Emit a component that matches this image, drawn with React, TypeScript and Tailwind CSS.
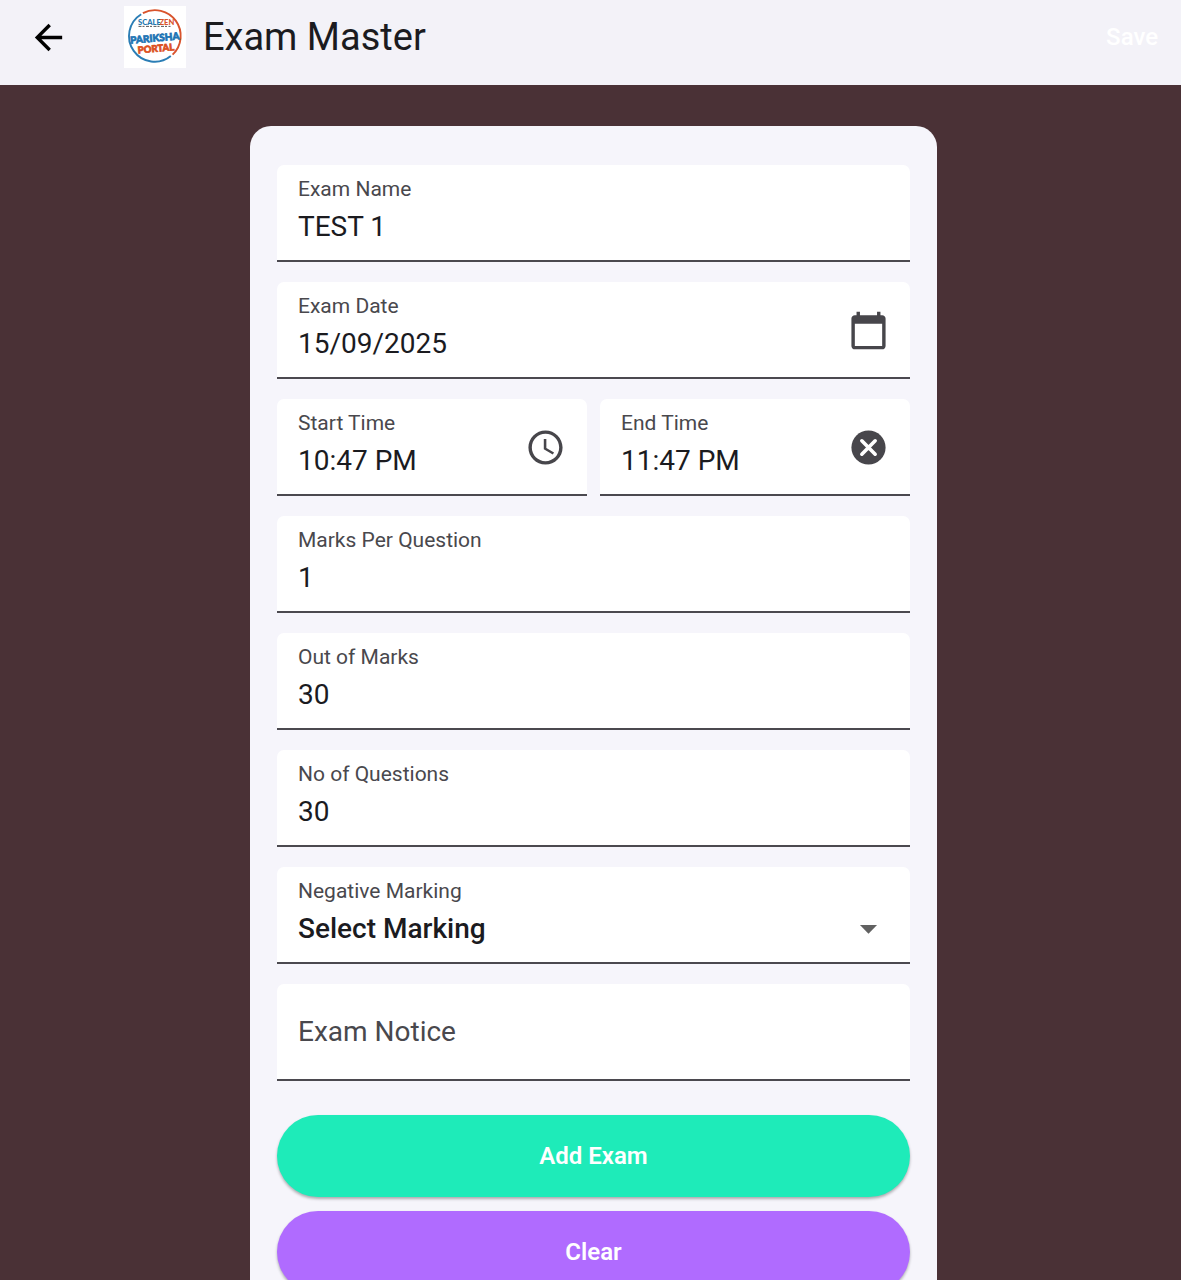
import { useState } from "react";
import type { ReactNode } from "react";

function BackIcon() {
  return (
    <svg viewBox="0 0 24 24" className="size-[41px]" fill="currentColor" aria-hidden="true">
      <path d="M20 11H7.83l5.59-5.59L12 4l-8 8 8 8 1.41-1.41L7.83 13H20v-2z" />
    </svg>
  );
}

function CalendarIcon() {
  return (
    <svg viewBox="0 0 24 24" className="size-[41px]" fill="currentColor" aria-hidden="true">
      <path d="M20 3h-1V1h-2v2H7V1H5v2H4c-1.1 0-2 .9-2 2v16c0 1.1.9 2 2 2h16c1.1 0 2-.9 2-2V5c0-1.1-.9-2-2-2zm0 18H4V8h16v13z" />
    </svg>
  );
}

function ClockIcon() {
  return (
    <svg viewBox="0 0 24 24" className="size-[41px]" fill="currentColor" aria-hidden="true">
      <path d="M11.99 2C6.47 2 2 6.48 2 12s4.47 10 9.99 10C17.52 22 22 17.52 22 12S17.52 2 11.99 2zM12 20c-4.42 0-8-3.58-8-8s3.58-8 8-8 8 3.58 8 8-3.58 8-8 8zm.5-13H11v6l5.25 3.15.75-1.23-4.5-2.67z" />
    </svg>
  );
}

function CancelIcon() {
  return (
    <svg viewBox="0 0 24 24" className="size-[41px]" aria-hidden="true">
      <circle cx="12" cy="12" r="10" fill="currentColor" />
      <path d="M8.1 8.1l7.8 7.8M15.9 8.1l-7.8 7.8" stroke="#fff" strokeWidth="2.1" strokeLinecap="round" />
    </svg>
  );
}

function DropIcon() {
  return (
    <svg viewBox="0 0 24 24" className="size-[41px]" fill="currentColor" aria-hidden="true">
      <path d="M7 10l5 5 5-5z" />
    </svg>
  );
}

function Logo() {
  return (
    <svg viewBox="0 0 62 62" className="size-[62px] bg-white" role="img" aria-label="Scale Zen Pariksha Portal">
      <g fill="none" strokeWidth="1.9">
        <path d="M18.9 7.2A25.7 25.7 0 0 1 48.6 48.6" stroke="#d9532c" />
        <path d="M17.2 8.2A25.7 25.7 0 1 0 46.8 50.1" stroke="#2a7db5" />
      </g>
      <g fontFamily="Lato, sans-serif" fontWeight="900">
        <text x="14" y="18.8" fontSize="7.6" fill="#2376ad">
          SCALE
        </text>
        <text x="35.5" y="18.8" fontSize="7.6" fill="#d9532c">
          ZEN
        </text>
        <path d="M14.5 20.4h32" stroke="#444" strokeWidth="0.9" strokeDasharray="3 1 2 1.5" />
        <g transform="rotate(-5 31 32)" strokeWidth="0.7">
          <text x="30.8" y="35.6" fontSize="10" textAnchor="middle" fill="#1c74b4" stroke="#1c74b4">
            PARIKSHA
          </text>
          <text x="31" y="46" fontSize="9.6" textAnchor="middle" fill="#dc4f20" stroke="#dc4f20">
            PORTAL
          </text>
        </g>
      </g>
    </svg>
  );
}

type FieldProps = {
  id: string;
  label: string;
  initial: string;
  action?: string;
  icon?: ReactNode;
};

function Field({ id, label, initial, action, icon }: FieldProps) {
  const [value, setValue] = useState(initial);
  return (
    <div className="flex h-[97px] min-w-0 rounded-t-[7px] border-b-2 border-[#4b494f] bg-white px-[21px]">
      <div className="flex min-w-0 flex-1 flex-col gap-[10px] pt-3">
        <label htmlFor={id} className="text-[21px] leading-6 text-[#49484d]">
          {label}
        </label>
        <input
          id={id}
          value={value}
          onChange={(e) => setValue(e.target.value)}
          className="h-8 w-full bg-transparent text-[28px] leading-8 text-[#1b1b1f] outline-none"
        />
      </div>
      {icon && (
        <button type="button" aria-label={action} className="mt-7 size-[41px] shrink-0 text-[#47464b]">
          {icon}
        </button>
      )}
    </div>
  );
}

export default function App() {
  return (
    <div className="flex h-screen flex-col bg-[#4a3136] font-[Roboto,sans-serif]">
      <header className="flex shrink-0 items-center bg-[#f3f2f8] pt-[6px] pr-[23px] pb-[17px] pl-7">
        <button type="button" aria-label="Back" className="text-black">
          <BackIcon />
        </button>
        <div className="ml-[55px]">
          <Logo />
        </div>
        <h1 className="ml-[17px] flex-1 text-[38px] leading-[44px] text-[#1b1b1f]">Exam Master</h1>
        <button type="button" className="text-[24px] leading-8 font-medium text-white">
          Save
        </button>
      </header>

      <main className="min-h-0 flex-1 overflow-y-auto pt-[41px] pl-[6px] [scrollbar-width:none]">
        <form
          onSubmit={(e) => e.preventDefault()}
          className="mx-auto max-w-[687px] rounded-[21px] bg-[#f6f5fb] px-[27px] pt-[39px] pb-10"
        >
          <div className="flex flex-col gap-5">
            <Field id="name" label="Exam Name" initial="TEST 1" />
            <Field id="date" label="Exam Date" initial="15/09/2025" action="Pick date" icon={<CalendarIcon />} />
            <div className="grid grid-cols-2 gap-[13px]">
              <Field id="start" label="Start Time" initial="10:47 PM" action="Pick start time" icon={<ClockIcon />} />
              <Field id="end" label="End Time" initial="11:47 PM" action="Clear end time" icon={<CancelIcon />} />
            </div>
            <Field id="marks" label="Marks Per Question" initial="1" />
            <Field id="total" label="Out of Marks" initial="30" />
            <Field id="count" label="No of Questions" initial="30" />
            <div className="relative flex h-[97px] flex-col gap-[10px] rounded-t-[7px] border-b-2 border-[#4b494f] bg-white px-[21px] pt-3">
              <label htmlFor="negative" className="text-[21px] leading-6 text-[#49484d]">
                Negative Marking
              </label>
              <select
                id="negative"
                className="h-8 w-full appearance-none bg-transparent text-[28px] leading-8 font-medium text-[#1b1b1f] outline-none"
              >
                <option>Select Marking</option>
              </select>
              <span className="pointer-events-none absolute right-[21px] bottom-[13px] text-[#616161]">
                <DropIcon />
              </span>
            </div>
            <input
              aria-label="Exam Notice"
              placeholder="Exam Notice"
              className="h-[97px] w-full rounded-t-[7px] border-b-2 border-[#4b494f] bg-white px-[21px] text-[28px] leading-8 text-[#1b1b1f] outline-none placeholder:text-[#49484d]"
            />
          </div>
          <div className="mt-[34px] flex flex-col gap-[14px]">
            <button
              type="submit"
              className="h-[82px] rounded-full bg-[#1eebb9] text-[24px] font-semibold text-white shadow-[0_2px_3px_rgba(0,0,0,0.3)]"
            >
              Add Exam
            </button>
            <button
              type="reset"
              className="h-[82px] rounded-full bg-[#b06bff] text-[24px] font-semibold text-white shadow-[0_2px_3px_rgba(0,0,0,0.3)]"
            >
              Clear
            </button>
          </div>
        </form>
      </main>
    </div>
  );
}
